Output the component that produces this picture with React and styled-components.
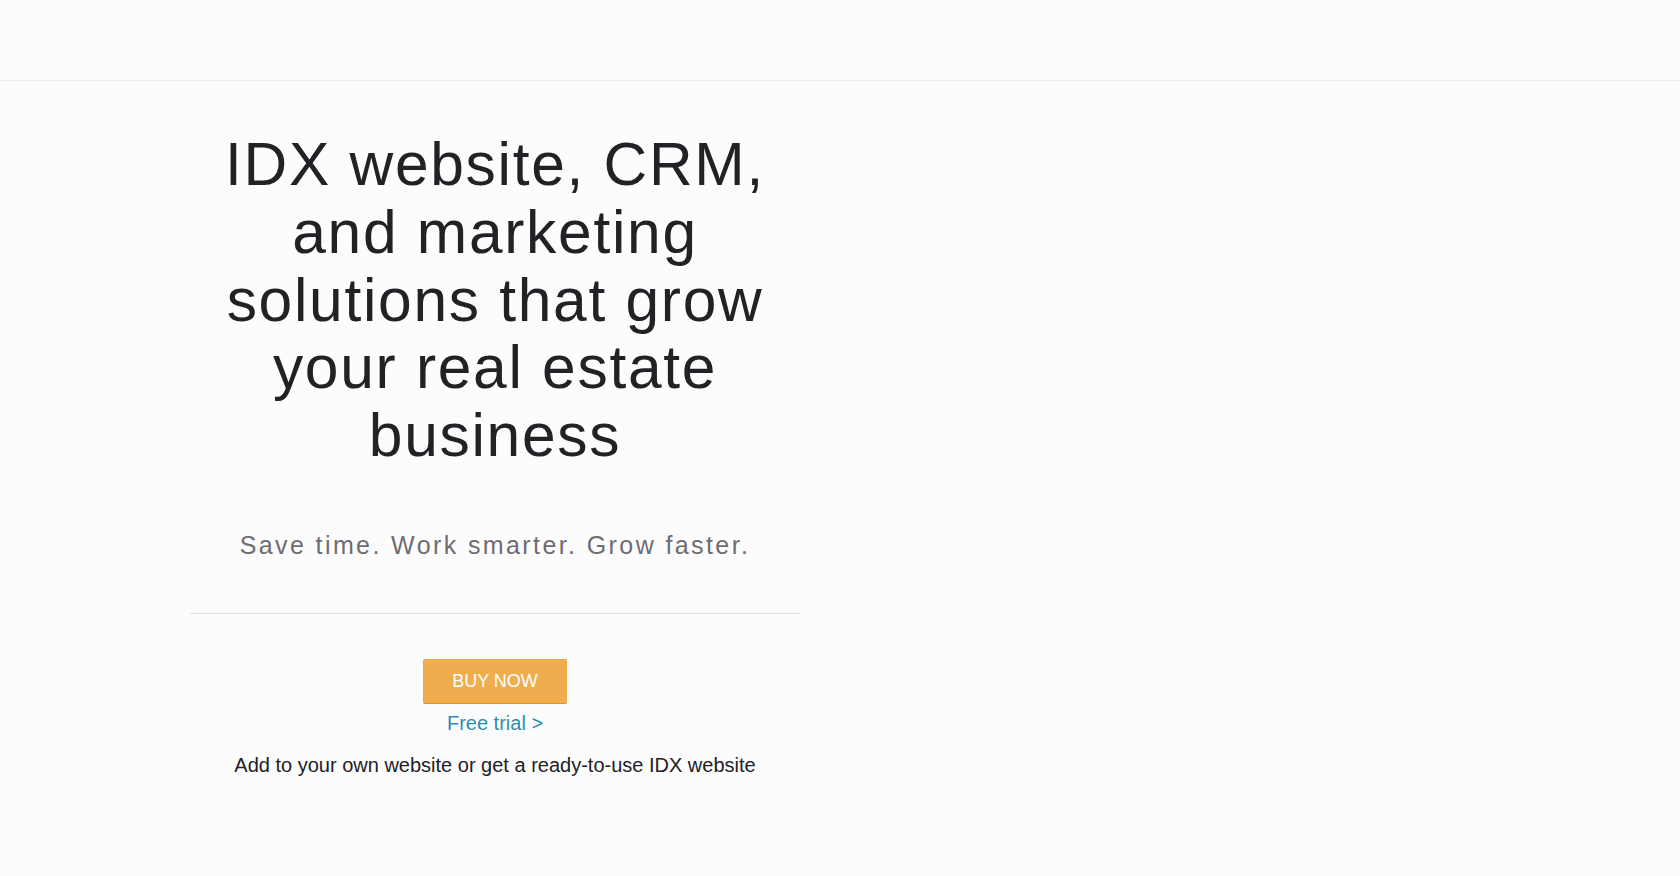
import React from 'react';
import styled, { createGlobalStyle } from 'styled-components';

const GlobalStyle = createGlobalStyle`
  html, body {
    margin: 0;
    padding: 0;
    background: #fdfcfd;
    font-family: "Liberation Sans", Arial, sans-serif;
  }
`;

const Page = styled.div`
  min-height: 876px;
  background: #fdfcfd;
`;

const Header = styled.header`
  height: 80px;
  border-bottom: 1px solid #efebef;
`;

const Hero = styled.section`
  display: flex;
  padding: 50px 0 0 190px;
`;

const Column = styled.div`
  width: 610px;
  display: flex;
  flex-direction: column;
  align-items: center;
  text-align: center;
`;

const Title = styled.h1`
  margin: 0;
  font-size: 60.5px;
  line-height: 67.8px;
  font-weight: 400;
  letter-spacing: 1.7px;
  color: #222125;
  width: 575px;
`;

const Tagline = styled.p`
  margin: 60px 0 0;
  font-size: 25px;
  line-height: 31px;
  letter-spacing: 2.4px;
  color: #6e6d71;
`;

const Divider = styled.hr`
  align-self: stretch;
  margin: 52px 0 0;
  border: 0;
  border-top: 1px solid #e2e0e2;
`;

const BuyButton = styled.button`
  margin-top: 45px;
  padding: 0 28px;
  height: 45px;
  font-family: inherit;
  font-size: 18px;
  color: #fff;
  background: #f0ad4e;
  border: 1px solid #efaa48;
  border-bottom-color: #df9527;
  border-radius: 2px;
  cursor: pointer;
`;

const TrialLink = styled.a`
  margin-top: 5px;
  font-size: 20px;
  line-height: 28px;
  color: #2f8db3;
  text-decoration: none;
`;

const Note = styled.p`
  margin: 14px 0 0;
  font-size: 20px;
  line-height: 28px;
  color: #222125;
`;

export default function App() {
  return (
    <Page>
      <GlobalStyle />
      <Header />
      <Hero>
        <Column>
          <Title>IDX website, CRM, and marketing solutions that grow your real estate business</Title>
          <Tagline>Save time. Work smarter. Grow faster.</Tagline>
          <Divider />
          <BuyButton>BUY NOW</BuyButton>
          <TrialLink href="#">Free trial &gt;</TrialLink>
          <Note>Add to your own website or get a ready-to-use IDX website</Note>
        </Column>
      </Hero>
    </Page>
  );
}
